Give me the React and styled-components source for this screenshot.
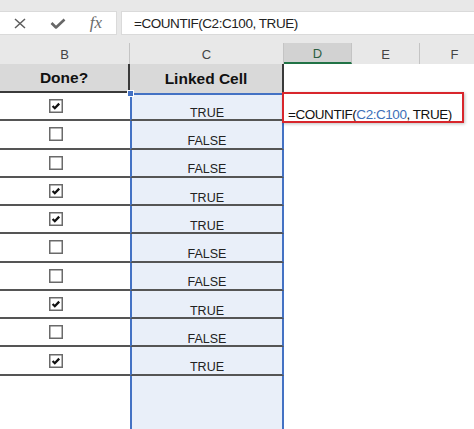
import React from 'react'
import styled, {createGlobalStyle} from 'styled-components'

const GlobalStyle = createGlobalStyle`
  html, body {
    margin: 0;
    padding: 0;
    background: #ffffff;
    overflow: hidden;
  }
  body {
    font-family: 'Liberation Sans', Arial, sans-serif;
  }
`

const Window = styled.div`
  width: 474px;
  height: 429px;
  display: flex;
  flex-direction: column;
  overflow: hidden;
  background: #ffffff;
`

const FormulaBar = styled.div`
  display: flex;
  gap: 4px;
  padding: 11px 0 8px 0;
  background: #e8e8e8;
`

const IconBox = styled.div`
  width: 117px;
  height: 24px;
  box-sizing: border-box;
  background: #ffffff;
  border: 1px solid #dadada;
  border-left: none;
  display: grid;
  grid-template-columns: repeat(3, 38px);
  justify-items: center;
  align-items: center;
  padding-left: 1px;
`

const Fx = styled.span`
  font-family: 'Liberation Serif', 'Times New Roman', serif;
  font-style: italic;
  font-size: 17px;
  color: #6a6a6a;
  line-height: 1;
  margin-top: -2px;
`

const FormulaInput = styled.div`
  flex: 1;
  height: 24px;
  box-sizing: border-box;
  background: #ffffff;
  border: 1px solid #dadada;
  border-right: none;
  padding-left: 12px;
  display: flex;
  align-items: center;
  font-size: 13.5px;
  letter-spacing: -0.45px;
  color: #222;
  white-space: nowrap;
`

const Sheet = styled.div`
  flex: 1;
  display: grid;
  grid-template-columns: 130px 154px 68px 68px 70px;
  grid-template-rows: 21px 29px repeat(10, 28.27px) 1fr;
  width: 490px;
`

const ColHead = styled.div`
  background: ${p => (p.$active ? '#d2d2d2' : '#e8e8e8')};
  border-right: 1px solid #c4c4c4;
  border-bottom: ${p => (p.$active ? '2px solid #217346' : 'none')};
  box-sizing: border-box;
  display: flex;
  align-items: center;
  justify-content: center;
  font-size: 13px;
  color: ${p => (p.$active ? '#2d5f43' : '#444')};
  padding-top: 1px;
`

const HeadCell = styled.div`
  box-sizing: border-box;
  background: ${p => (p.$filled ? '#d9d9d9' : '#ffffff')};
  border-bottom: ${p => (p.$underline ? '2px solid #3a3a3a' : 'none')};
  border-right: ${p => (p.$divider ? '2px solid #3a3a3a' : 'none')};
  display: flex;
  align-items: center;
  justify-content: center;
  font-size: 15.5px;
  font-weight: bold;
  color: #111;
  padding-top: 1px;
`

const BoxCell = styled.div`
  box-sizing: border-box;
  border-bottom: 2px solid #555;
  display: flex;
  align-items: center;
  padding-left: 49px;
`

const LinkedCell = styled.div`
  position: relative;
  box-sizing: border-box;
  background: #e9eff9;
  border-left: 2px solid #4472c4;
  border-right: 2px solid #4472c4;
  border-top: ${p => (p.$first ? '2px solid #4472c4' : 'none')};
  border-bottom: ${p => (p.$open ? 'none' : '2px solid #555')};
  display: flex;
  align-items: flex-end;
  justify-content: center;
  font-size: 12.5px;
  line-height: 1;
  color: #222;
`

const Handle = styled.span`
  position: absolute;
  left: -5px;
  top: -5px;
  width: 5px;
  height: 5px;
  background: #4472c4;
  border: 1px solid #ffffff;
`

const PlainCell = styled.div`
  background: #ffffff;
`

const EditCell = styled.div`
  position: relative;
  display: flex;
  align-items: flex-end;
  padding: 0 0 0 4px;
  font-size: 13.5px;
  line-height: 1;
  letter-spacing: -0.45px;
  color: #111;
  white-space: nowrap;
  overflow: visible;
  z-index: 1;
`

const RangeRef = styled.span`
  color: #3d6fb8;
`

const Caret = styled.span`
  display: inline-block;
  width: 1px;
  height: 17px;
  background: #444;
  margin-left: 3px;
  margin-bottom: -2px;
`

const Callout = styled.span`
  position: absolute;
  left: -2px;
  top: -1px;
  width: 182px;
  height: 31px;
  box-sizing: border-box;
  border: 2px solid #d8262c;
  box-shadow: 1px 1px 3px rgba(0, 0, 0, 0.25);
  pointer-events: none;
`

const CrossIcon = () => (
  <svg width="12" height="11" viewBox="0 0 12 11">
    <path d="M1 1 L11 10 M11 1 L1 10" stroke="#5c5c5c" strokeWidth="1.5" fill="none" />
  </svg>
)

const TickIcon = () => (
  <svg width="16" height="11" viewBox="0 0 16 11">
    <path d="M1.5 5 L6 9.5 L14.5 1.5" stroke="#676767" strokeWidth="2.6" fill="none" strokeLinejoin="round" />
  </svg>
)

const Checkbox = ({checked}) => (
  <svg width="14" height="14" viewBox="0 0 14 14">
    <rect x="0.75" y="0.75" width="12.5" height="12.5" fill="#fff" stroke="#6a6a6a" strokeWidth="1.5" />
    {checked && (
      <path d="M3.6 7 L5.8 9.2 L10.2 4.6" stroke="#111" strokeWidth="2.3" fill="none" />
    )}
  </svg>
)

const rows = [true, false, false, true, true, false, false, true, false, true]

const App = () => {
  return (
    <Window>
      <GlobalStyle />
      <FormulaBar>
        <IconBox>
          <CrossIcon />
          <TickIcon />
          <Fx>fx</Fx>
        </IconBox>
        <FormulaInput>=COUNTIF(C2:C100, TRUE)</FormulaInput>
      </FormulaBar>

      <Sheet>
        <ColHead>B</ColHead>
        <ColHead>C</ColHead>
        <ColHead $active>D</ColHead>
        <ColHead>E</ColHead>
        <ColHead>F</ColHead>

        <HeadCell $filled $underline $divider>Done?</HeadCell>
        <HeadCell $filled $divider>Linked Cell</HeadCell>
        <HeadCell />
        <HeadCell />
        <HeadCell />

        {rows.map((done, i) => (
          <React.Fragment key={i}>
            <BoxCell>
              <Checkbox checked={done} />
            </BoxCell>
            <LinkedCell $first={i === 0}>
              {i === 0 && <Handle />}
              {done ? 'TRUE' : 'FALSE'}
            </LinkedCell>
            {i === 0 ? (
              <EditCell>
                <span>
                  =COUNTIF(<RangeRef>C2:C100</RangeRef>, TRUE)
                </span>
                <Caret />
                <Callout />
              </EditCell>
            ) : (
              <PlainCell />
            )}
            <PlainCell />
            <PlainCell />
          </React.Fragment>
        ))}

        <PlainCell />
        <LinkedCell $open />
        <PlainCell />
        <PlainCell />
        <PlainCell />
      </Sheet>
    </Window>
  )
}

export default App
